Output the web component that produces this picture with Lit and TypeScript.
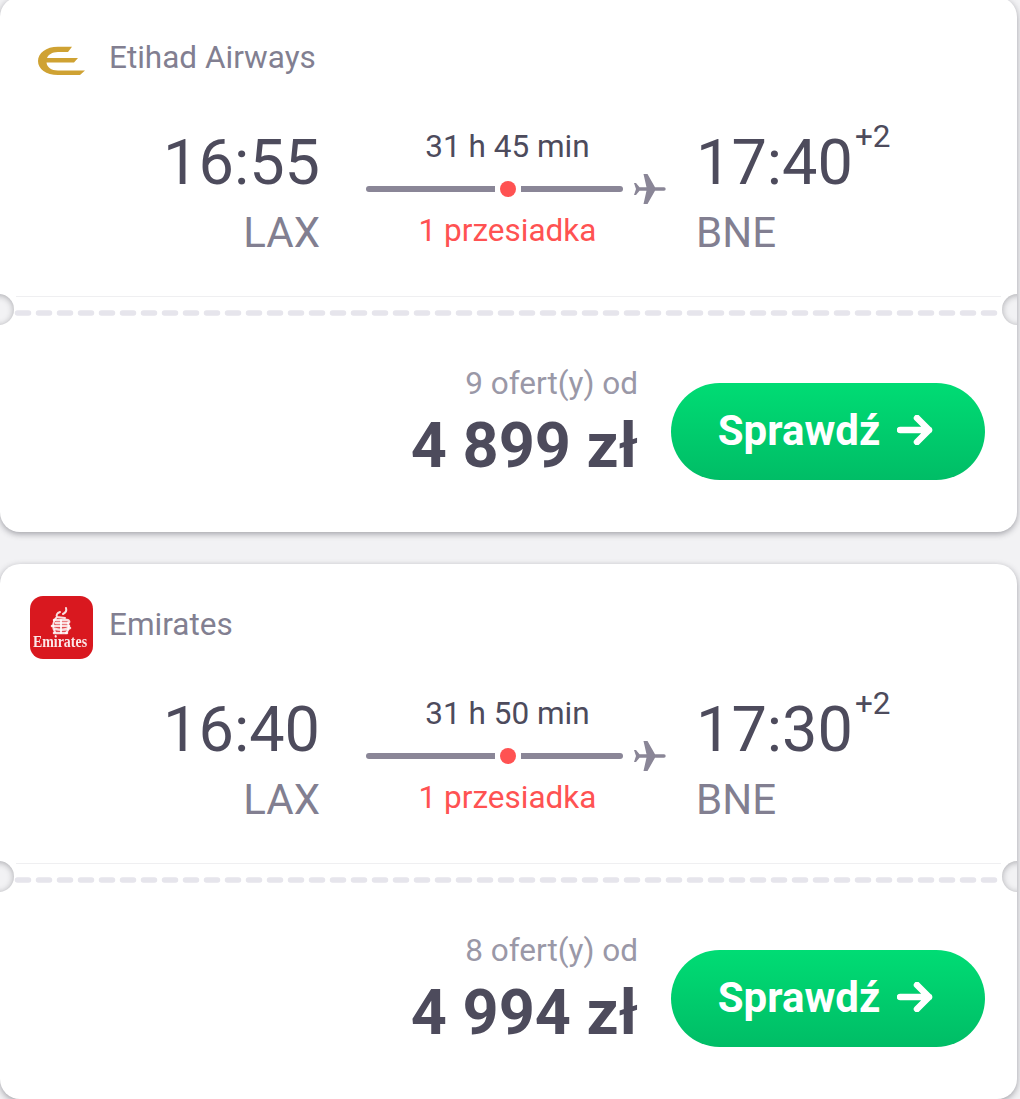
import { LitElement, html, css, svg } from 'lit';
import { customElement } from 'lit/decorators.js';

interface Flight {
  airline: string;
  logo: 'etihad' | 'emirates';
  depart: string;
  arrive: string;
  duration: string;
  offers: string;
  price: string;
}

const FLIGHTS: Flight[] = [
  { airline: 'Etihad Airways', logo: 'etihad', depart: '16:55', arrive: '17:40', duration: '31 h 45 min', offers: '9 ofert(y) od', price: '4 899 zł' },
  { airline: 'Emirates', logo: 'emirates', depart: '16:40', arrive: '17:30', duration: '31 h 50 min', offers: '8 ofert(y) od', price: '4 994 zł' },
];

const etihadLogo = svg`<svg class="etihad" viewBox="0 0 47 30" width="47" height="30">
  <path fill="#cfa233" d="M34 .7H20C8 .7 0 7 0 15s8 14 20 14h22l5-4.500H20c-7 0-11-3.500-11.500-8H36l4-4.500H9c1-3 5-6 11-6h10z"/>
</svg>`;

const emiratesLogo = svg`<svg class="emirates" viewBox="0 0 63 63" width="63" height="63">
  <defs><filter id="soft" x="-10%" y="-10%" width="120%" height="120%"><feGaussianBlur stdDeviation="0.5"/></filter></defs>
  <rect width="63" height="63" rx="13" fill="#d9181f"/>
  <g filter="url(#soft)">
    <g fill="none" stroke="#fff" stroke-linecap="round" stroke-linejoin="round" stroke-opacity="0.85">
      <path stroke-width="2" d="M36 12c1 3-1 5-3 6M30 16c-3 1-4 3-3 5l8 1"/>
      <path stroke-width="2.500" d="M24 24h13c2 0 3 2 1 3H26M22 30h17M25 33c4 1 10 1 15-1M24 37h13"/>
      <path stroke-width="2" d="M26 22c-3 3-4 9-1 14M38 27c1 3 1 7-2 10M31 24v13"/>
    </g>
    <text transform="translate(30 50.500) scale(0.82 1)" text-anchor="middle" font-family="'Liberation Serif', serif" font-weight="700" font-size="17" fill="#fff" fill-opacity="0.9">Emirates</text>
  </g>
</svg>`;

const plane = svg`<svg class="plane" viewBox="0 0 32 32" width="32" height="32">
  <path fill="#8a8697" d="M30 14.300H21L13.500 1h-4l3 13.300h-7L2 10H0l2 6-2 6h2l3.500-4.300h7l-3 13.300h4L21 17.700h9a1.700 1.700 0 0 0 0-3.400z"/>
</svg>`;

const arrow = svg`<svg class="arrow" viewBox="0 0 36 30" width="36" height="30">
  <path fill="none" stroke="#fff" stroke-width="6.500" stroke-linecap="round" stroke-linejoin="round" d="M3 15h29M20 3l12 12-12 12"/>
</svg>`;

@customElement('flight-card')
export class FlightCard extends LitElement {
  static properties = { flight: { attribute: false } };
  declare flight: Flight;

  static styles = css`
    :host {
      display: block;
    }

    .card {
      position: relative;
      overflow: hidden;
      width: 1017px;
      height: 535px;
      background: #fff;
      border-radius: 20px;
      box-shadow: 0 2px 6px rgba(60, 60, 70, 0.45);
      display: flex;
      flex-direction: column;
    }

    .top {
      height: 299px;
      padding: 32px 0 0 30px;
      box-sizing: border-box;
    }

    .airline {
      display: flex;
      align-items: center;
      gap: 16px;
      height: 63px;
      font-size: 31.5px;
      color: #827f91;
    }

    .airline span {
      margin-top: -6px;
    }

    .logo {
      width: 63px;
      height: 63px;
      display: flex;
      align-items: center;
      justify-content: center;
    }

    .schedule {
      display: flex;
      margin-top: 35px;
    }

    .side {
      padding-top: 5px;
    }

    .side.from {
      width: 290px;
      text-align: right;
    }

    .side.to {
      margin-left: 30px;
    }

    .time {
      font-size: 63px;
      line-height: 62px;
      color: #4d4b5c;
    }

    .time sup {
      position: absolute;
      font-size: 31.5px;
      line-height: 31px;
      margin: -11px 0 0 2px;
    }

    .code {
      font-size: 42px;
      line-height: 48px;
      margin-top: 15px;
      color: #827f91;
    }

    .route {
      width: 300px;
      margin-left: 46px;
      text-align: center;
    }

    .duration {
      width: 283px;
      font-size: 31.5px;
      line-height: 40px;
      color: #4d4b5c;
    }

    .stops {
      width: 283px;
      font-size: 31.5px;
      line-height: 40px;
      color: #ff5252;
    }

    .track {
      display: flex;
      align-items: center;
      height: 44px;
    }

    .line {
      width: 129px;
      height: 6px;
      background: #8a8697;
      border-radius: 3px 0 0 3px;
    }

    .line.right {
      width: 102px;
      border-radius: 0 3px 3px 0;
    }

    .dot {
      width: 16px;
      height: 16px;
      margin: 0 5px;
      border-radius: 50%;
      background: #ff5252;
    }

    .plane {
      flex: none;
      margin-left: 11px;
    }

    .rule {
      height: 1px;
      margin: 0 16px;
      background: #efeff1;
    }

    .tear {
      height: 31px;
      display: flex;
      align-items: center;
    }

    .tear svg {
      display: block;
    }

    .notch {
      position: absolute;
      top: 297px;
      width: 31px;
      height: 31px;
      border-radius: 50%;
      background: #f2f2f4;
      box-shadow: inset 0 1px 6px rgba(40, 40, 50, 0.35);
    }

    .notch.left {
      left: -17px;
    }

    .notch.right {
      right: -16px;
    }

    .bottom {
      display: flex;
      justify-content: flex-end;
      align-items: flex-start;
      gap: 33px;
      padding: 36px 32px 44px 0;
    }

    .price-box {
      text-align: right;
    }

    .offers {
      font-size: 31.5px;
      line-height: 40px;
      color: #9a98a7;
    }

    .price {
      font-size: 63px;
      line-height: 84px;
      font-weight: 700;
      color: #4d4b5c;
    }

    .check {
      margin-top: 19px;
      width: 314px;
      height: 97px;
      padding: 0 5px 3px 0;
      box-sizing: border-box;
      border-radius: 49px;
      background: linear-gradient(#00dc74, #00bd66);
      display: flex;
      align-items: center;
      justify-content: center;
      gap: 17px;
      color: #fff;
      font-size: 42px;
      font-weight: 700;
    }
  `;

  render() {
    const f = this.flight;
    return html`
      <div class="card">
        <div class="top">
          <div class="airline">
            <div class="logo">${f.logo === 'etihad' ? etihadLogo : emiratesLogo}</div>
            <span>${f.airline}</span>
          </div>
          <div class="schedule">
            <div class="side from">
              <div class="time">${f.depart}</div>
              <div class="code">LAX</div>
            </div>
            <div class="route">
              <div class="duration">${f.duration}</div>
              <div class="track">
                <div class="line"></div>
                <div class="dot"></div>
                <div class="line right"></div>
                ${plane}
              </div>
              <div class="stops">1 przesiadka</div>
            </div>
            <div class="side to">
              <div class="time">${f.arrive}<sup>+2</sup></div>
              <div class="code">BNE</div>
            </div>
          </div>
        </div>
        <div class="rule"></div>
        <div class="tear">
          <svg width="1017" height="6" viewBox="0 0 1017 6">
            <line x1="17.500" y1="3" x2="1000" y2="3" stroke="#e6e5ec" stroke-width="5.500" stroke-linecap="round" stroke-dasharray="11 10"/>
          </svg>
        </div>
        <div class="notch left"></div>
        <div class="notch right"></div>
        <div class="bottom">
          <div class="price-box">
            <div class="offers">${f.offers}</div>
            <div class="price">${f.price}</div>
          </div>
          <div class="check"><span>Sprawdź</span>${arrow}</div>
        </div>
      </div>
    `;
  }
}

@customElement('app-root')
export class AppRoot extends LitElement {
  static styles = css`
    :host {
      display: block;
      background: #f2f2f4;
      font-family: Roboto, sans-serif;
      height: 1099px;
      overflow: hidden;
    }

    .list {
      display: flex;
      flex-direction: column;
      gap: 32px;
      margin-top: -3px;
    }
  `;

  render() {
    return html`
      <div class="list">
        ${FLIGHTS.map((f) => html`<flight-card .flight=${f}></flight-card>`)}
      </div>
    `;
  }
}

declare global {
  interface HTMLElementTagNameMap {
    'app-root': AppRoot;
    'flight-card': FlightCard;
  }
}
